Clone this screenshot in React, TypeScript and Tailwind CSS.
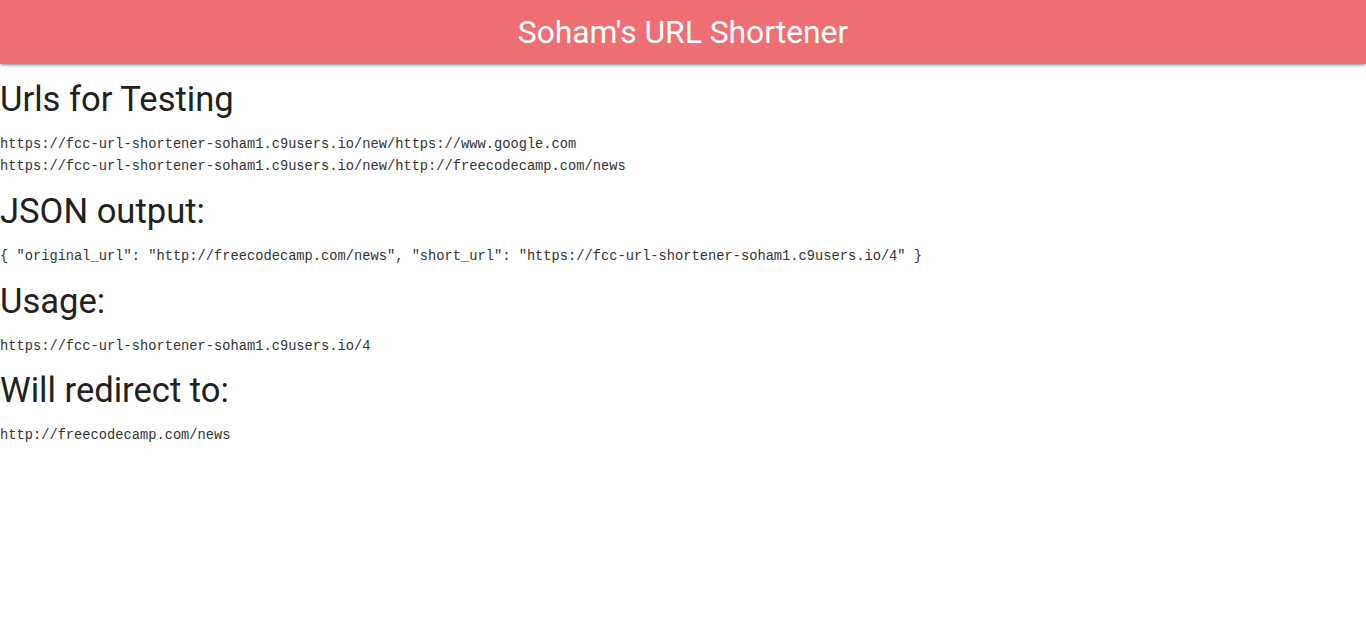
import React from 'react';

const headingCls =
  "font-['Roboto',sans-serif] text-[34.6px] leading-[37.62px] font-normal text-[#212121] mb-[15.3px]";
const codeCls =
  "block text-[13.72px] leading-[22px] text-[#333]";

const testUrls = [
  'https://fcc-url-shortener-soham1.c9users.io/new/https://www.google.com',
  'https://fcc-url-shortener-soham1.c9users.io/new/http://freecodecamp.com/news',
];

const App: React.FC = () => {
  return (
    <div className="min-h-screen bg-white font-['Roboto',sans-serif]">
      <nav className="h-16 bg-[#ef6f74] shadow-[0_2px_2px_0_rgba(0,0,0,0.14),0_3px_1px_-2px_rgba(0,0,0,0.12),0_1px_5px_0_rgba(0,0,0,0.2)] flex items-center justify-center">
        <span className="text-white text-[31.8px] leading-[64px]">Soham's URL Shortener</span>
      </nav>

      <div className="font-['DejaVu_Sans_Mono',monospace]">
        <h4 className={`${headingCls} mt-[17.3px]`}>Urls for Testing</h4>
        <div>
          {testUrls.map((u) => (
            <code key={u} className={codeCls}>{u}</code>
          ))}
        </div>

        <h4 className={`${headingCls} mt-[14.8px]`}>JSON output:</h4>
        <code className={codeCls}>
          {'{ "original_url": "http://freecodecamp.com/news", "short_url": "https://fcc-url-shortener-soham1.c9users.io/4" }'}
        </code>

        <h4 className={`${headingCls} mt-[14.8px]`}>Usage:</h4>
        <code className={codeCls}>https://fcc-url-shortener-soham1.c9users.io/4</code>

        <h4 className={`${headingCls} mt-[14.8px]`}>Will redirect to:</h4>
        <code className={codeCls}>http://freecodecamp.com/news</code>
      </div>
    </div>
  );
};

export default App;
